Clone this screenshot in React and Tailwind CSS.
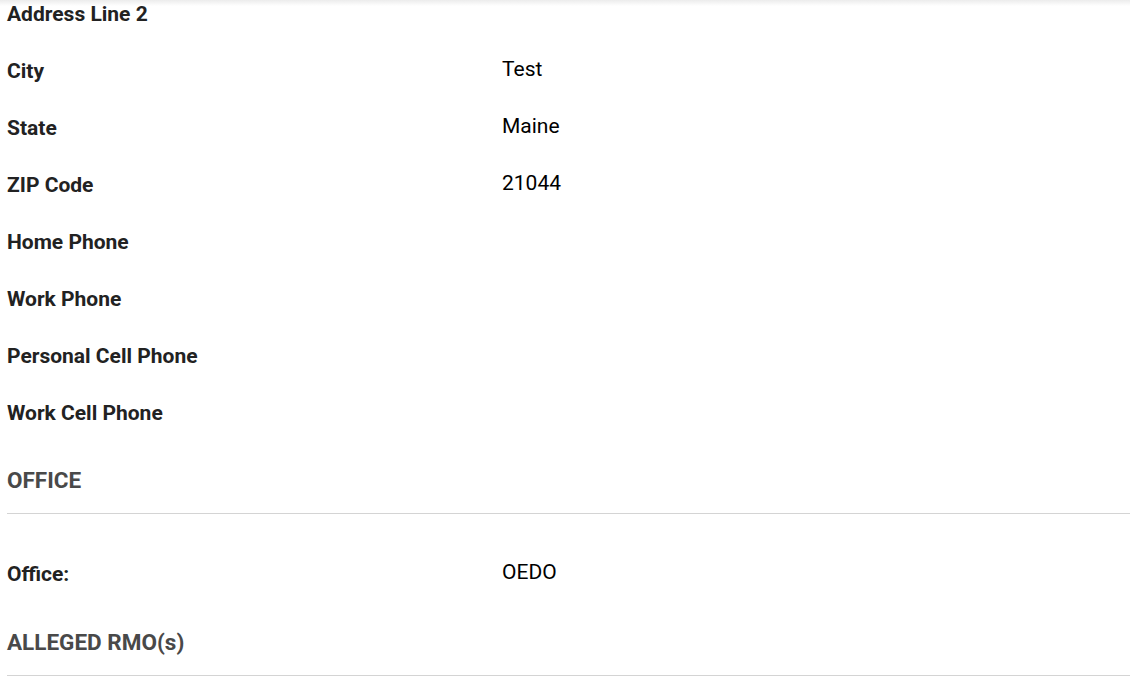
import React from "react"

const contactRows = [
  { label: "Address Line 2", value: "" },
  { label: "City", value: "Test" },
  { label: "State", value: "Maine" },
  { label: "ZIP Code", value: "21044" },
  { label: "Home Phone", value: "" },
  { label: "Work Phone", value: "" },
  { label: "Personal Cell Phone", value: "" },
  { label: "Work Cell Phone", value: "" }
]

function Row({ label, value }) {
  return (
    <div className="grid grid-cols-[495px_1fr] h-[57px] items-center">
      <div className="font-bold text-[21px] text-[#222] pt-[4px]">{label}</div>
      <div className="text-[21px] text-black">{value}</div>
    </div>
  )
}

function SectionTitle({ children }) {
  return (
    <div className="border-b border-[#d4d4d4] pb-[20px]">
      <h3 className="font-bold text-[22.5px] text-[#494949] leading-[26px]">{children}</h3>
    </div>
  )
}

export default function App() {
  return (
    <div className="relative h-[679px] overflow-hidden bg-white font-['Roboto',sans-serif]">
      {/* sticky header shadow */}
      <div className="absolute top-0 left-0 right-0 h-[6px] bg-gradient-to-b from-[#ececec] to-white/0" />

      <div className="pl-[7px] mt-[-16px]">
        {contactRows.map(r => (
          <Row key={r.label} label={r.label} value={r.value} />
        ))}

        <div className="pt-[27px]">
          <SectionTitle>OFFICE</SectionTitle>
        </div>

        <div className="pt-[30px]">
          <Row label="Office:" value="OEDO" />
        </div>

        <div className="pt-[28px]">
          <SectionTitle>ALLEGED RMO(s)</SectionTitle>
        </div>
      </div>
    </div>
  )
}
